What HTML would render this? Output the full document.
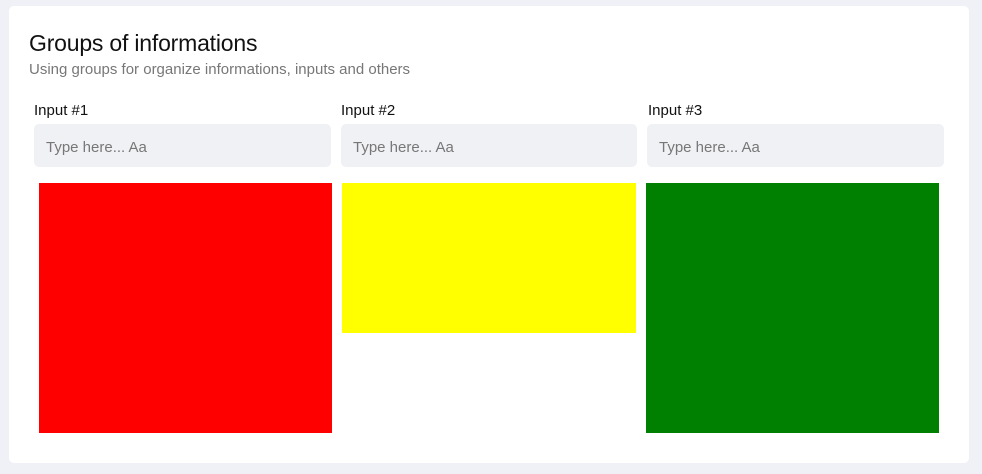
<!DOCTYPE html>
<html><head><style>
body{margin:0;width:982px;height:474px;background:#f0f1f6;font-family:"Liberation Sans",sans-serif;position:relative;overflow:hidden}
.card{position:absolute;left:9px;top:6px;width:960px;height:457px;background:#fff;border-radius:5px}
.a{position:absolute}
h1{position:absolute;left:29px;top:30px;margin:0;font-size:23px;font-weight:normal;color:#111;letter-spacing:-0.2px}
.sub{left:29px;top:61px;font-size:15px;color:#777}
.lbl{top:102px;font-size:15px;color:#111}
.in{top:124px;height:43px;background:#f0f1f5;border-radius:5px;font-size:15px;color:#777;line-height:47px;box-sizing:border-box;padding-left:12px}
</style></head><body>
<div class="card"></div>
<h1>Groups of informations</h1>
<div class="a sub">Using groups for organize informations, inputs and others</div>
<div class="a lbl" style="left:34px">Input #1</div>
<div class="a lbl" style="left:341px">Input #2</div>
<div class="a lbl" style="left:648px">Input #3</div>
<div class="a in" style="left:34px;width:297px">Type here... Aa</div>
<div class="a in" style="left:341px;width:296px">Type here... Aa</div>
<div class="a in" style="left:647px;width:297px">Type here... Aa</div>
<div class="a" style="left:39px;top:183px;width:293px;height:250px;background:#f00"></div>
<div class="a" style="left:342px;top:183px;width:294px;height:150px;background:#ff0"></div>
<div class="a" style="left:646px;top:183px;width:293px;height:250px;background:#008000"></div>
</body></html>
